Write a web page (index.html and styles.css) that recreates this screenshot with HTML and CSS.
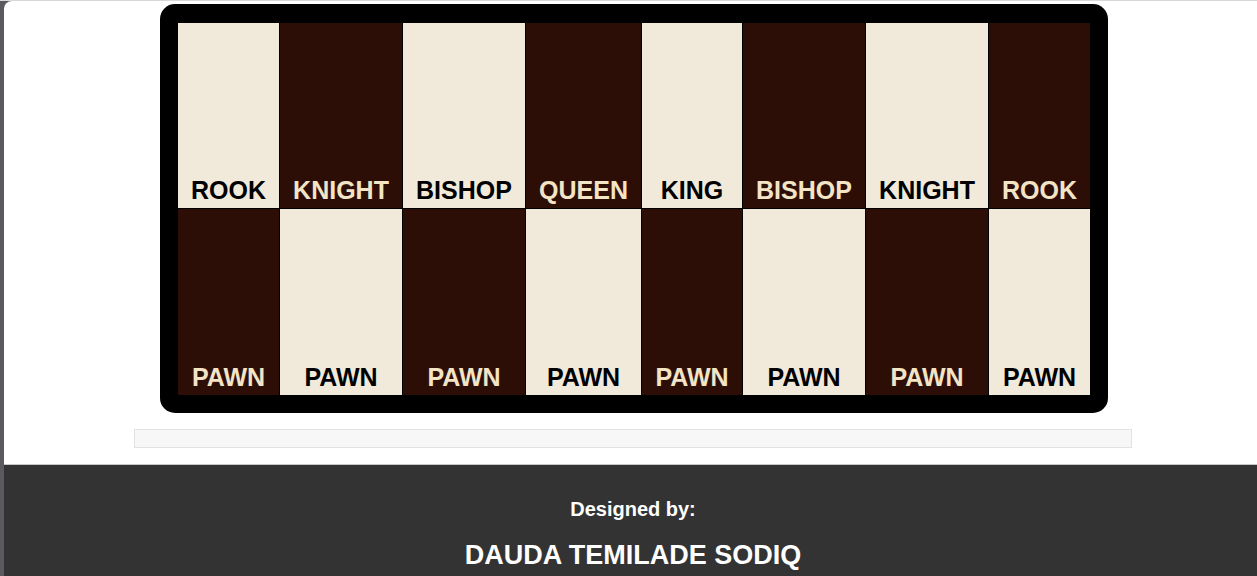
FILE: index.html
```html
<!DOCTYPE html>
<html lang="en">
<head>
<meta charset="utf-8">
<title>Chess Board</title>
<link rel="stylesheet" href="styles.css">
</head>
<body>
<div class="frame">
  <div class="strip"></div>
  <div class="window">
    <main class="main">
      <div class="board">
        <div class="cell light">ROOK</div>
        <div class="cell dark">KNIGHT</div>
        <div class="cell light">BISHOP</div>
        <div class="cell dark">QUEEN</div>
        <div class="cell light">KING</div>
        <div class="cell dark">BISHOP</div>
        <div class="cell light">KNIGHT</div>
        <div class="cell dark">ROOK</div>
        <div class="cell dark">PAWN</div>
        <div class="cell light">PAWN</div>
        <div class="cell dark">PAWN</div>
        <div class="cell light">PAWN</div>
        <div class="cell dark">PAWN</div>
        <div class="cell light">PAWN</div>
        <div class="cell dark">PAWN</div>
        <div class="cell light">PAWN</div>
      </div>
      <div class="bar"></div>
    </main>
    <footer class="footer">
      <p class="designed">Designed by:</p>
      <p class="author">DAUDA TEMILADE SODIQ</p>
    </footer>
  </div>
</div>
</body>
</html>
```

FILE: styles.css
```css
html, body {
  margin: 0;
  padding: 0;
  height: 100%;
  overflow: hidden;
}

body {
  background: #5a5a5f;
  font-family: "Liberation Sans", Arial, sans-serif;
}

.frame {
  display: flex;
  height: 100%;
  border-top: 1px solid #d8d8d8;
  box-sizing: border-box;
}

.strip {
  width: 4px;
  flex: none;
}

.window {
  flex: 1;
  background: #ffffff;
  border-top-left-radius: 8px;
  display: flex;
  flex-direction: column;
  overflow: hidden;
}

.main {
  display: flex;
  flex-direction: column;
  align-items: center;
  padding: 3px 0 16px 5px;
}

.board {
  display: grid;
  grid-template-columns: 101px 122px 122px 115px 100px 122px 122px 101px;
  grid-template-rows: 185px 186px;
  gap: 1px;
  padding: 19px 18px 18px;
  margin-left: 2px;
  background: #000000;
  border-radius: 15px;
}

.cell {
  display: flex;
  align-items: flex-end;
  justify-content: center;
  padding-bottom: 3px;
  box-sizing: border-box;
  font-size: 25px;
  font-weight: bold;
}

.light {
  background: #f1eadb;
  color: #000000;
}

.dark {
  background: #2d0e07;
  color: #f3e4c6;
}

.bar {
  margin-top: 16px;
  width: 998px;
  height: 19px;
  box-sizing: border-box;
  background: #f7f7f7;
  border: 1px solid #e2e2e2;
}

.footer {
  flex: 1;
  background: #333333;
  border-top: 1px solid #c8c8c8;
  padding: 33px 0 0 5px;
  text-align: center;
  color: #ffffff;
  font-weight: bold;
}

.designed {
  margin: 0;
  font-size: 20px;
}

.author {
  margin: 19px 0 0;
  font-size: 27px;
}
```
